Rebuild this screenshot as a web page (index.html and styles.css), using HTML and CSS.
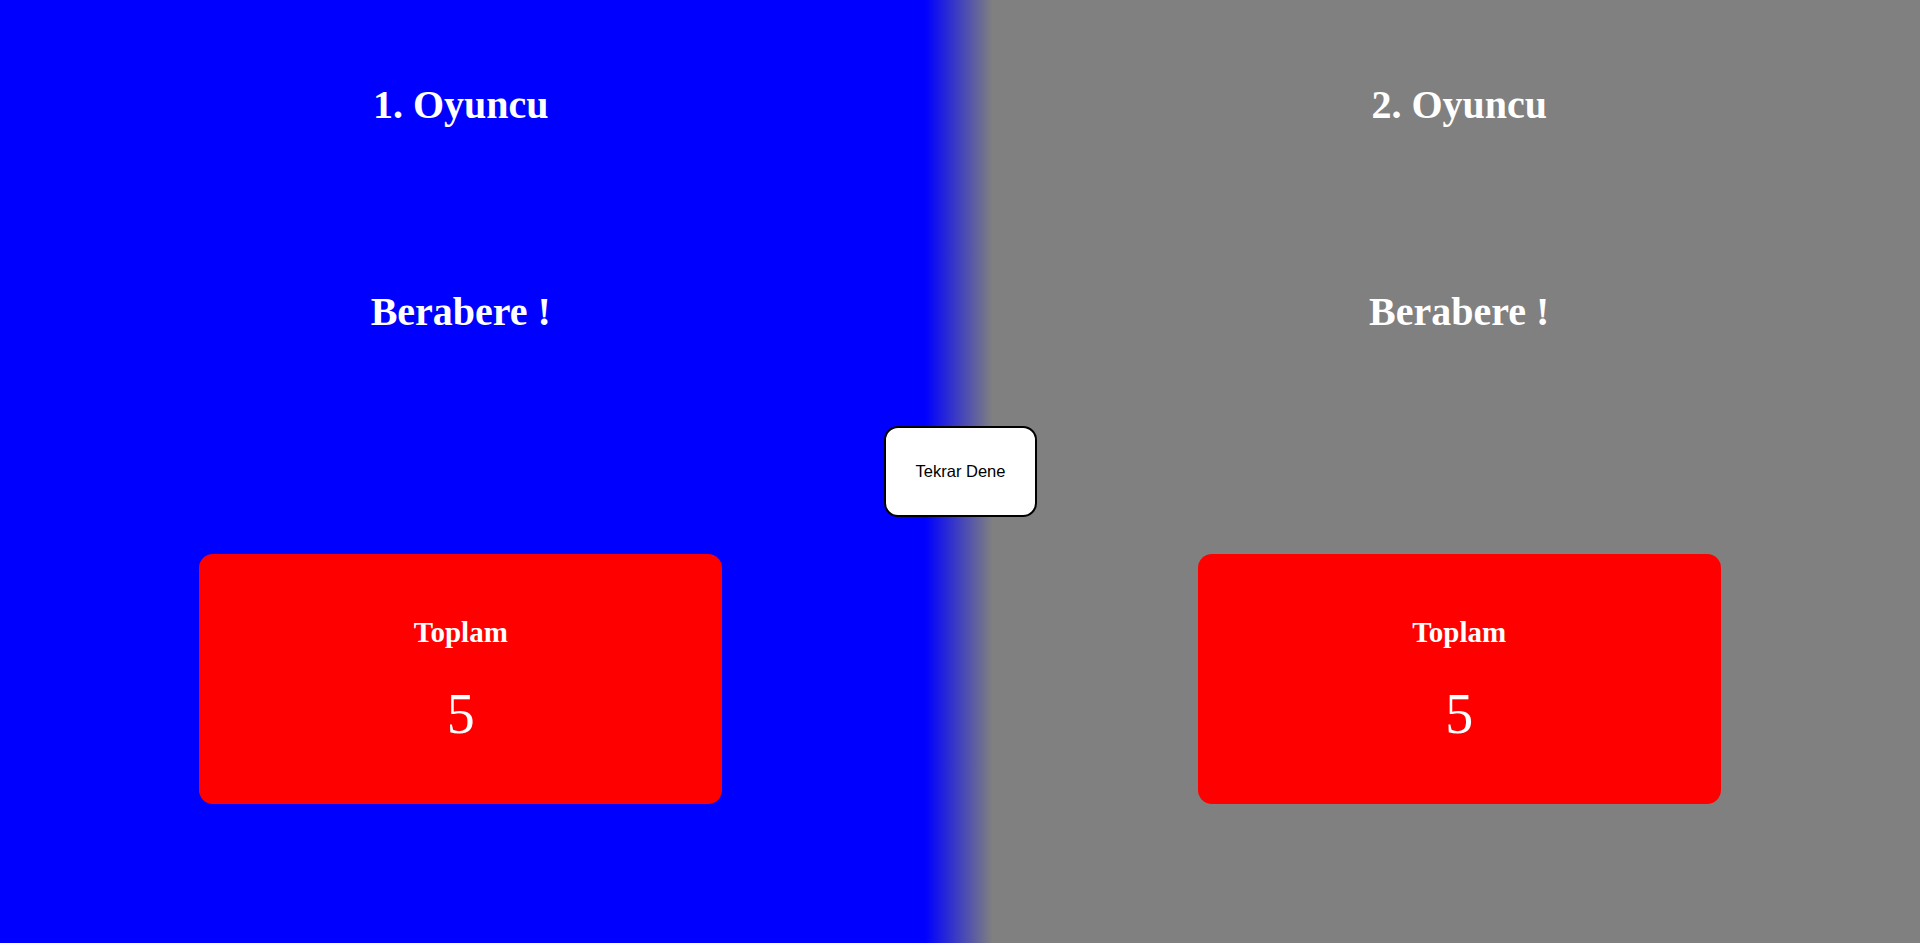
FILE: index.html
```html
<!DOCTYPE html>
<html lang="tr">
<head>
<meta charset="utf-8">
<title>Zar Oyunu</title>
<link rel="stylesheet" href="styles.css">
</head>
<body>
<main class="game">
  <section class="player">
    <h1 class="player-name">1. Oyuncu</h1>
    <h2 class="result">Berabere !</h2>
    <div class="total-card">
      <h3 class="total-label">Toplam</h3>
      <p class="total-value">5</p>
    </div>
  </section>
  <section class="player">
    <h1 class="player-name">2. Oyuncu</h1>
    <h2 class="result">Berabere !</h2>
    <div class="total-card">
      <h3 class="total-label">Toplam</h3>
      <p class="total-value">5</p>
    </div>
  </section>
  <button class="retry">Tekrar Dene</button>
</main>
</body>
</html>
```

FILE: styles.css
```css
html, body {
  margin: 0;
  padding: 0;
  height: 100%;
}
body {
  background: linear-gradient(to right, #0000ff 48.2%, #808080 51.7%);
  font-family: "Liberation Serif", "Times New Roman", serif;
  color: #ffffff;
  overflow: hidden;
}
.game {
  position: relative;
  display: flex;
  justify-content: space-between;
  height: 943px;
}
.player {
  width: 48%;
  display: flex;
  flex-direction: column;
  align-items: center;
  padding-top: 82px;
  box-sizing: border-box;
}
.player-name {
  margin: 0;
  font-size: 40px;
  font-weight: bold;
  line-height: 46px;
}
.result {
  margin: 161px 0 0;
  font-size: 40px;
  font-weight: bold;
  line-height: 46px;
}
.total-card {
  margin-top: 219px;
  width: 523px;
  height: 250px;
  background: #ff0000;
  border-radius: 14px;
  display: flex;
  flex-direction: column;
  align-items: center;
  padding-top: 62px;
  box-sizing: border-box;
}
.total-label {
  margin: 0;
  font-size: 29px;
  font-weight: bold;
  line-height: 33px;
}
.total-value {
  margin: 33px 0 0;
  font-size: 56px;
  font-weight: normal;
  line-height: 64px;
}
.retry {
  position: absolute;
  left: 884px;
  top: 426px;
  width: 153px;
  height: 91px;
  background: #ffffff;
  border: 2px solid #000000;
  border-radius: 14px;
  font-family: "Liberation Sans", Arial, sans-serif;
  font-size: 16.5px;
  color: #000000;
  padding: 0;
  box-sizing: border-box;
}
```
